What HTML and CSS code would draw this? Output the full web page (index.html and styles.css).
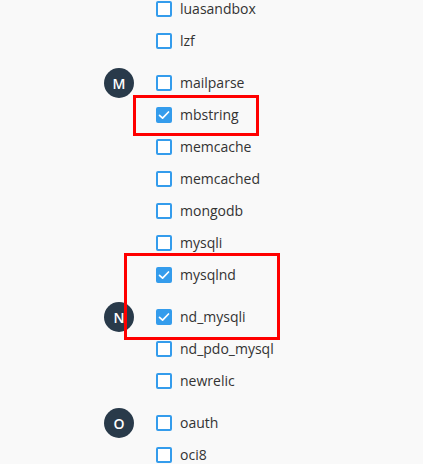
FILE: index.html
```html
<!DOCTYPE html>
<html>
<head>
<meta charset="utf-8">
<link rel="stylesheet" href="styles.css">
</head>
<body>
<div class="page">
  <div class="groups">
    <div class="group">
      <div class="letter-slot"></div>
      <ul class="items">
        <li class="item"><span class="box"></span><span class="label">luasandbox</span></li>
        <li class="item"><span class="box"></span><span class="label">lzf</span></li>
      </ul>
    </div>
    <div class="group">
      <div class="letter-slot"><span class="letter">M</span></div>
      <ul class="items">
        <li class="item"><span class="box"></span><span class="label">mailparse</span></li>
        <li class="item"><span class="box checked"><svg viewBox="0 0 16 16"><polyline points="3.5,8.3 6.6,11.2 12.5,5"/></svg></span><span class="label">mbstring</span></li>
        <li class="item"><span class="box"></span><span class="label">memcache</span></li>
        <li class="item"><span class="box"></span><span class="label">memcached</span></li>
        <li class="item"><span class="box"></span><span class="label">mongodb</span></li>
        <li class="item"><span class="box"></span><span class="label">mysqli</span></li>
        <li class="item"><span class="box checked"><svg viewBox="0 0 16 16"><polyline points="3.5,8.3 6.6,11.2 12.5,5"/></svg></span><span class="label">mysqlnd</span></li>
      </ul>
    </div>
    <div class="group">
      <div class="letter-slot"><span class="letter">N</span></div>
      <ul class="items">
        <li class="item"><span class="box checked"><svg viewBox="0 0 16 16"><polyline points="3.5,8.3 6.6,11.2 12.5,5"/></svg></span><span class="label">nd_mysqli</span></li>
        <li class="item"><span class="box"></span><span class="label">nd_pdo_mysql</span></li>
        <li class="item"><span class="box"></span><span class="label">newrelic</span></li>
      </ul>
    </div>
    <div class="group">
      <div class="letter-slot"><span class="letter">O</span></div>
      <ul class="items">
        <li class="item"><span class="box"></span><span class="label">oauth</span></li>
        <li class="item"><span class="box"></span><span class="label">oci8</span></li>
      </ul>
    </div>
  </div>
  <div class="mark mark-one"></div>
  <div class="mark mark-two"></div>
</div>
</body>
</html>
```
FILE: styles.css
```css
html, body {
  margin: 0;
  padding: 0;
  background: #f9f9f9;
}
body {
  font-family: "Open Sans", "Liberation Sans", sans-serif;
  font-size: 14px;
  color: #333333;
  overflow: hidden;
  height: 464px;
}
.page {
  position: relative;
  display: flow-root;
  height: 464px;
  overflow: hidden;
}
.groups {
  display: flex;
  flex-direction: column;
  gap: 10px;
  padding-left: 104px;
  margin-top: -7px;
}
.group {
  display: flex;
  align-items: flex-start;
  gap: 22px;
}
.letter-slot {
  width: 30px;
  flex: none;
  padding-top: 1px;
}
.letter {
  display: flex;
  align-items: center;
  justify-content: center;
  width: 30px;
  height: 30px;
  border-radius: 50%;
  background: #293a4a;
  color: #ffffff;
  font-weight: 600;
  font-size: 14px;
}
.items {
  list-style: none;
  margin: 0;
  padding: 0;
}
.item {
  display: flex;
  align-items: center;
  gap: 8px;
  height: 32px;
}
.box {
  box-sizing: border-box;
  width: 16px;
  height: 16px;
  border: 2px solid #349cec;
  border-radius: 2px;
  background: #ffffff;
  display: flex;
  align-items: center;
  justify-content: center;
}
.box.checked {
  background: #349cec;
  border-color: #349cec;
}
.box svg {
  width: 16px;
  height: 16px;
  flex: none;
  fill: none;
  stroke: #ffffff;
  stroke-width: 1.7;
  stroke-linecap: round;
  stroke-linejoin: round;
}
.label {
  line-height: 20px;
}
.mark {
  position: absolute;
  border: 3px solid #ff0000;
  box-sizing: border-box;
}
.mark-one {
  left: 133px;
  top: 95px;
  width: 126px;
  height: 41px;
}
.mark-two {
  left: 124px;
  top: 253px;
  width: 156px;
  height: 87px;
}
```
